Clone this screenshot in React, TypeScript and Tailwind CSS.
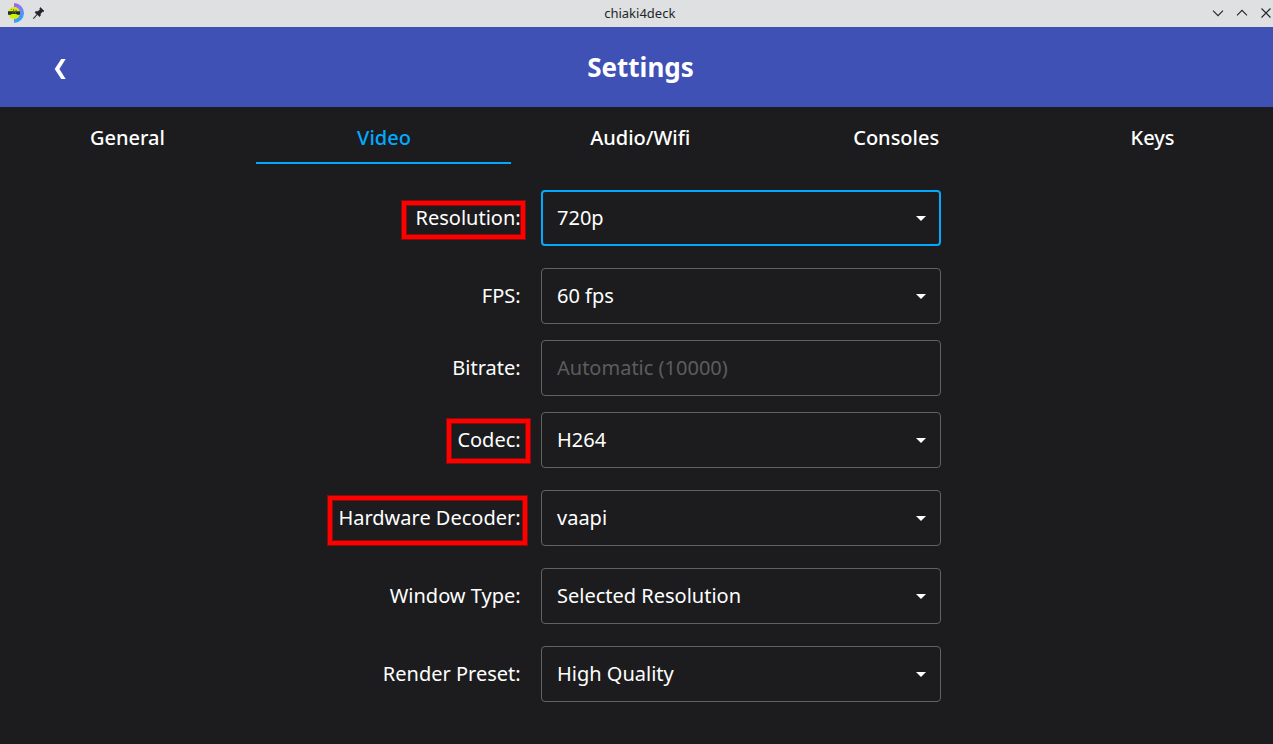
import React from "react";

type Row = {
  label: string;
  value: string;
  kind?: "input";
  focused?: boolean;
  gap: string;
  mark?: string;
};

const tabs = ["General", "Video", "Audio/Wifi", "Consoles", "Keys"];

const rows: Row[] = [
  { label: "Resolution:", value: "720p", focused: true, gap: "", mark: "left-[401px] top-[10px] w-[125px] h-[40px]" },
  { label: "FPS:", value: "60 fps", gap: "mt-[22px]" },
  { label: "Bitrate:", value: "Automatic (10000)", kind: "input", gap: "mt-4" },
  { label: "Codec:", value: "H264", gap: "mt-4", mark: "left-[446px] top-[6px] w-[85px] h-[46px]" },
  { label: "Hardware Decoder:", value: "vaapi", gap: "mt-[22px]", mark: "left-[327px] top-[5px] w-[201px] h-[51px]" },
  { label: "Window Type:", value: "Selected Resolution", gap: "mt-[22px]" },
  { label: "Render Preset:", value: "High Quality", gap: "mt-[22px]" },
];

function AppLogo() {
  return (
    <svg width="20" height="20" viewBox="0 0 20 20" className="shrink-0">
      <defs>
        <linearGradient id="ring" x1="0" y1="0" x2="0.4" y2="1">
          <stop offset="0" stopColor="#b45ee8" />
          <stop offset="0.5" stopColor="#7c7df5" />
          <stop offset="1" stopColor="#28a8fa" />
        </linearGradient>
      </defs>
      <path d="M10 0A10 10 0 0 1 10 20V15.9A5.9 5.9 0 0 0 10 4.1Z" fill="url(#ring)" />
      <circle cx="10" cy="10" r="6" fill="#d2f000" />
      <path d="M4 8.2h12v3.6h-2.8l-.9-.8H7.7l-.9.8H4Z" fill="#202c3d" />
      <path d="M9.2 6.3h1v2h-1zM11.6 6.8h1v1.5h-1zM7 6.2h1v.9H7z" fill="#59633a" />
      <path d="M8.7 9.4h.9v1h-.9zM11 9.2h.9v1H11z" fill="#7f8b39" />
    </svg>
  );
}

function PinIcon() {
  return (
    <svg width="12" height="12" viewBox="0 0 12 12" className="shrink-0">
      <path
        d="M7.4.5 11 4l-.8.8-.7-.2-2.2 2.3.1 1.8-.9.9-2.3-2.1L1 11.5H.5V11l3.3-3.4L2 5.3l1-.9 2 .1 2.2-2.2-.4-1Z"
        fill="#232629"
        stroke="#232629"
        strokeWidth=".6"
      />
    </svg>
  );
}

function WindowIcon({ d }: { d: string }) {
  return (
    <svg width="12" height="12" viewBox="0 0 12 12" fill="none" stroke="#232629" strokeWidth="1.1" className="shrink-0">
      <path d={d} />
    </svg>
  );
}

function SettingRow({ row }: { row: Row }) {
  return (
    <div className={`relative flex h-14 items-center ${row.gap}`}>
      <div className="w-[541px] pr-[20.35px] text-right">{row.label}</div>
      <div
        className={`flex h-14 w-[400px] items-center justify-between rounded-[4px] ${
          row.focused ? "border-2 border-[#03a9ff] pl-3.5 pr-[13px]" : "border border-[#626263] pl-[15px] pr-3.5"
        } ${row.kind === "input" ? "text-[#5c5c5d]" : ""}`}
      >
        <span>{row.value}</span>
        {row.kind !== "input" && (
          <svg width="10" height="5" viewBox="0 0 10 5" className="shrink-0">
            <path d="M0 0h10L5 5Z" fill="#fff" />
          </svg>
        )}
      </div>
      {row.mark && (
        <div className={`absolute border border-[#8b0b0b] ${row.mark}`}>
          <div className="h-full w-full border-4 border-[#ff0000]">
            <div className="h-full w-full border border-[#8b0b0b]" />
          </div>
        </div>
      )}
    </div>
  );
}

export default function App() {
  return (
    <div className="h-[744px] w-[1273px] overflow-hidden bg-[#1c1c1e] font-['Noto_Sans',sans-serif] text-[20px] leading-7 text-white">
      <div className="grid h-[27px] grid-cols-[1fr_auto_1fr] items-center bg-[#dee0e2] text-[#232629]">
        <div className="flex items-center gap-[9px] pb-px pl-1">
          <AppLogo />
          <PinIcon />
        </div>
        <div className="pl-[6.6px] text-[13px] leading-none">chiaki4deck</div>
        <div className="flex items-center justify-end gap-3 pb-px pr-[1px]">
          <WindowIcon d="M1 3.7 6 8.7l5-5" />
          <WindowIcon d="m1 8.3 5-5 5 5" />
          <WindowIcon d="m1.5 1.5 9 9m0-9-9 9" />
        </div>
      </div>

      <div className="w-[1280px]">
        <header className="grid h-20 grid-cols-[120px_1fr_120px] items-center bg-[#3f51b5]">
          <div className="flex justify-center pt-1">
            <svg width="12" height="20" viewBox="0 0 12 20">
              <path d="M7.2 0H11.7L5.4 10 11.7 20H7.2L.7 10Z" fill="#fff" />
            </svg>
          </div>
          <h1 className="pl-px text-center text-[26px] font-bold leading-9">Settings</h1>
        </header>

        <nav className="grid h-[57px] grid-cols-5 font-medium">
          {tabs.map((t) => (
            <div
              key={t}
              className={`flex items-center justify-center border-b-2 pt-[7px] ${
                t === "Video"
                  ? "mr-px border-[#03a9ff] pl-px text-[#03a9ff]"
                  : t === "General"
                    ? "border-transparent pr-px"
                    : t === "Keys"
                      ? "border-transparent pl-px"
                      : "border-transparent pl-[0.4px]"
              }`}
            >
              <span className="-mt-px">{t}</span>
            </div>
          ))}
        </nav>

        <main className="pt-[26px]">
          {rows.map((r) => (
            <SettingRow key={r.label} row={r} />
          ))}
        </main>
      </div>
    </div>
  );
}
